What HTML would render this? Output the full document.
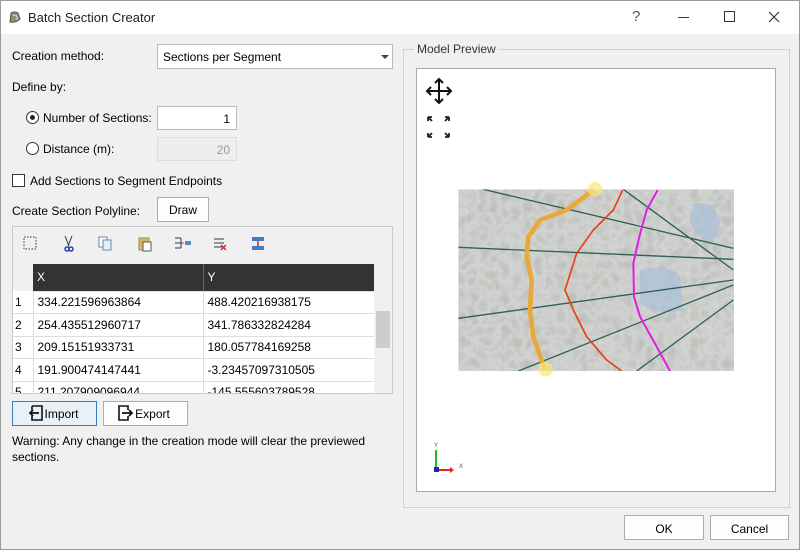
<!DOCTYPE html>
<html><head><meta charset="utf-8"><style>
*{box-sizing:border-box;margin:0;padding:0}
body{width:800px;height:550px;background:#f0f0f0;font-family:"Liberation Sans",sans-serif;font-size:12px;color:#000;position:relative;overflow:hidden}
.a{position:absolute}
.win{left:0;top:0;width:800px;height:550px;border:1px solid #9a9a9a}
.title{left:1px;top:1px;width:798px;height:33px;background:#fff}
.inp{background:#fff;border:1px solid #c8c8c8}
.btn{background:#fdfdfd;border:1px solid #adadad;text-align:center}
.grid td{border-right:1px solid #ddd;border-bottom:1px solid #ddd;height:22.5px;padding-left:4px;font-size:12px;white-space:nowrap;overflow:hidden}
</style></head><body>
<div class="a win"></div>
<div class="a title"></div>
<svg class="a" style="left:8px;top:10px" width="14" height="14"><path d="M2 12 L3 3 Q6 1 10 3 L12 9 Q8 13 2 12Z" fill="#9a8a78" stroke="#554" stroke-width="1"/><path d="M5 5 L9 6 L9 10" fill="none" stroke="#ddd"/></svg>
<div class="a" style="left:28px;top:10px;font-size:13px;color:#222">Batch Section Creator</div>
<div class="a" style="left:632px;top:8px;font-size:15px;color:#555">?</div>
<div class="a" style="left:678px;top:17px;width:11px;height:1px;background:#333"></div>
<div class="a" style="left:724px;top:11px;width:11px;height:11px;border:1px solid #333"></div>
<svg class="a" style="left:768px;top:11px" width="12" height="12"><path d="M1 1L11 11M11 1L1 11" stroke="#333" stroke-width="1.2"/></svg>

<div class="a" style="left:12px;top:49px">Creation method:</div>
<div class="a inp" style="left:157px;top:44px;width:236px;height:25px;border-color:#bbb"></div>
<div class="a" style="left:163px;top:50px">Sections per Segment</div>
<div class="a" style="left:381px;top:55px;border-left:4px solid transparent;border-right:4px solid transparent;border-top:4px solid #444"></div>
<div class="a" style="left:12px;top:80px">Define by:</div>
<div class="a" style="left:26px;top:111px;width:13px;height:13px;border:1px solid #333;border-radius:50%;background:#fff"></div>
<div class="a" style="left:30px;top:115px;width:5px;height:5px;border-radius:50%;background:#222"></div>
<div class="a" style="left:43px;top:111px">Number of Sections:</div>
<div class="a inp" style="left:157px;top:106px;width:80px;height:24px;text-align:right;padding:5px 6px 0 0;border-color:#bbb">1</div>
<div class="a" style="left:26px;top:142px;width:13px;height:13px;border:1px solid #333;border-radius:50%;background:#fff"></div>
<div class="a" style="left:43px;top:142px">Distance (m):</div>
<div class="a" style="left:157px;top:137px;width:80px;height:24px;background:#eee;border:1px solid #ddd;text-align:right;padding:5px 6px 0 0;color:#999">20</div>
<div class="a" style="left:12px;top:174px;width:13px;height:13px;border:1px solid #333;background:#fff"></div>
<div class="a" style="left:30px;top:174px">Add Sections to Segment Endpoints</div>
<div class="a" style="left:12px;top:204px">Create Section Polyline:</div>
<div class="a btn" style="left:157px;top:197px;width:52px;height:25px;padding-top:5px">Draw</div>

<div class="a" style="left:12px;top:226px;width:381px;height:168px;border:1px solid #c8c8c8;background:#f0f0f0"></div>
<svg class="a" style="left:20px;top:233px" width="270" height="22">
<rect x="4" y="4" width="12" height="12" fill="none" stroke="#333" stroke-dasharray="1.5 1.5"/>
<path d="M45 3 L49 13 M52 3 L48 13" stroke="#333"/><circle cx="47" cy="16" r="2" fill="none" stroke="#24a" stroke-width="1.5"/><circle cx="51" cy="16" r="2" fill="none" stroke="#24a" stroke-width="1.5"/>
<rect x="79" y="4" width="8" height="10" fill="#fff" stroke="#68a"/><rect x="83" y="7" width="8" height="10" fill="#e8eef8" stroke="#68a"/>
<rect x="119" y="5" width="10" height="12" fill="#d9b766" stroke="#986"/><rect x="123" y="9" width="8" height="9" fill="#fff" stroke="#555"/>
<path d="M155 5h6M155 10h6M155 15h6M161 5v10" stroke="#335" fill="none"/><rect x="165" y="8" width="6" height="4" fill="#5a8ac8"/><path d="M164 10h-3" stroke="#c33"/>
<path d="M194 6h10M194 10h10M194 14h8" stroke="#335"/><path d="M201 12l5 5M206 12l-5 5" stroke="#d22" stroke-width="1.5"/>
<rect x="232" y="4" width="12" height="4" fill="#4a7ac0"/><rect x="232" y="13" width="12" height="4" fill="#4a7ac0"/><path d="M238 8v5" stroke="#d22" stroke-width="1.5"/>
</svg>
<div class="a" style="left:13px;top:264px;width:361px;height:129px;background:#fff;overflow:hidden">
<table class="grid" style="border-collapse:collapse;table-layout:fixed;width:361px">
<colgroup><col style="width:20px"><col style="width:170px"><col style="width:171px"></colgroup>
<tr style="background:#333;color:#fff"><td style="background:#f0f0f0;height:27px;border:none"></td><td style="height:27px;border-right:1px solid #666">X</td><td style="height:27px">Y</td></tr>
<tr><td style="padding-left:2px">1</td><td>334.221596963864</td><td>488.420216938175</td></tr>
<tr><td style="padding-left:2px">2</td><td>254.435512960717</td><td>341.786332824284</td></tr>
<tr><td style="padding-left:2px">3</td><td>209.15151933731</td><td>180.057784169258</td></tr>
<tr><td style="padding-left:2px">4</td><td>191.900474147441</td><td>-3.23457097310505</td></tr>
<tr><td style="padding-left:2px">5</td><td>211.207909096944</td><td>-145.555603789528</td></tr>
</table></div>
<div class="a" style="left:374px;top:290px;width:18px;height:103px;background:#f0f0f0"></div>
<div class="a" style="left:376px;top:311px;width:14px;height:37px;background:#cdcdcd"></div>

<div class="a btn" style="left:12px;top:401px;width:85px;height:25px;border-color:#3b7cbd;background:#e8f0f8;padding-top:5px;padding-left:14px">Import</div>
<svg class="a" style="left:28px;top:405px" width="16" height="16"><path d="M4 1h10v14H4v-4M4 5V1" fill="none" stroke="#111" stroke-width="1.6"/><path d="M11 8H2M5 5L2 8l3 3" fill="none" stroke="#111" stroke-width="1.8"/></svg>
<div class="a btn" style="left:103px;top:401px;width:85px;height:25px;padding-top:5px;padding-left:14px">Export</div>
<svg class="a" style="left:118px;top:405px" width="16" height="16"><path d="M10 5V1H1v14h9v-4" fill="none" stroke="#111" stroke-width="1.6"/><path d="M4 8h10M11 5l3 3-3 3" fill="none" stroke="#111" stroke-width="1.8"/></svg>
<div class="a" style="left:12px;top:433px;width:370px;line-height:16px">Warning: Any change in the creation mode will clear the previewed sections.</div>

<div class="a" style="left:403px;top:49px;width:387px;height:459px;border:1px solid #d0d0d0"></div>
<div class="a" style="left:414px;top:42px;background:#f0f0f0;padding:0 3px;color:#333">Model Preview</div>
<div class="a" style="left:416px;top:68px;width:360px;height:424px;background:#fff;border:1px solid #a8a8a8"></div>
<svg class="a" style="left:425px;top:77px" width="28" height="28"><path d="M14 2v24M2 14h24" stroke="#111" stroke-width="2"/><path d="M10 6l4-4 4 4M10 22l4 4 4-4M6 10l-4 4 4 4M22 10l4 4-4 4" fill="none" stroke="#111" stroke-width="2"/></svg>
<svg class="a" style="left:426px;top:115px" width="26" height="24"><path d="M2 2h4M2 2v4M2 2l4 4M23 2h-4M23 2v4M23 2l-4 4M2 22h4M2 22v-4M2 22l4-4M23 22h-4M23 22v-4M23 22l-4-4" stroke="#222" stroke-width="1.8" fill="none"/></svg>

<svg class="a" style="left:400px;top:170px" width="400" height="220" viewBox="0 0 1200 660">
<defs><clipPath id="c"><rect x="175" y="58" width="827" height="545"/></clipPath>
<filter id="f" x="0" y="0" width="1" height="1"><feTurbulence baseFrequency="0.03" numOctaves="3" seed="4"/><feColorMatrix values="0 0 0 0 0.9 0 0 0 0 0.9 0 0 0 0 0.9 0 0 0 -1.4 1.0"/></filter></defs>
<g clip-path="url(#c)">
<rect x="175" y="58" width="827" height="545" fill="#bdbfbb"/>
<rect x="175" y="58" width="827" height="545" filter="url(#f)" opacity="0.45"/>
<path d="M880 100 Q950 90 960 160 L940 220 Q880 200 870 150Z" fill="#a9c0d8" opacity="0.7"/>
<path d="M720 300 Q800 280 840 320 L850 420 Q780 440 720 400Z" fill="#a9c0d8" opacity="0.7"/>
<g stroke="#2f5f5c" stroke-width="4" fill="none">
<path d="M250 58L1000 235M175 232L1000 268M175 445L1000 330M355 603L1000 345M710 603L1000 390M670 58L1000 300"/>
</g>
<path d="M668 60L640 120L580 180L530 250L495 360L520 420L560 500L620 570L665 603" stroke="#e84010" stroke-width="5" fill="none"/>
<path d="M773 60L740 120L718 200L700 280L702 380L720 440L770 530L810 603" stroke="#e020e0" stroke-width="6" fill="none"/>
</g>
<path d="M580 60 L500 120 L420 150 L385 200 L380 260 L395 330 L390 420 L400 500 L435 600" stroke="#e8a936" stroke-width="14" fill="none" stroke-linejoin="round"/>
<circle cx="585" cy="58" r="22" fill="#f7ea7a" opacity="0.7"/><circle cx="437" cy="598" r="22" fill="#f7ea7a" opacity="0.7"/>
</svg>

<svg class="a" style="left:432px;top:440px" width="40" height="35"><path d="M4 30V10" stroke="#2b2" stroke-width="2"/><path d="M4 30h16" stroke="#e22" stroke-width="2"/><path d="M18 27l4 3-4 3" fill="#e22"/><rect x="2" y="27" width="5" height="5" fill="#22b"/><text x="2" y="7" font-size="6" fill="#555" font-family="Liberation Sans">Y</text><text x="27" y="28" font-size="6" fill="#555" font-family="Liberation Sans">X</text></svg>

<div class="a btn" style="left:624px;top:515px;width:80px;height:25px;padding-top:6px">OK</div>
<div class="a btn" style="left:710px;top:515px;width:79px;height:25px;padding-top:6px">Cancel</div>
</body></html>
